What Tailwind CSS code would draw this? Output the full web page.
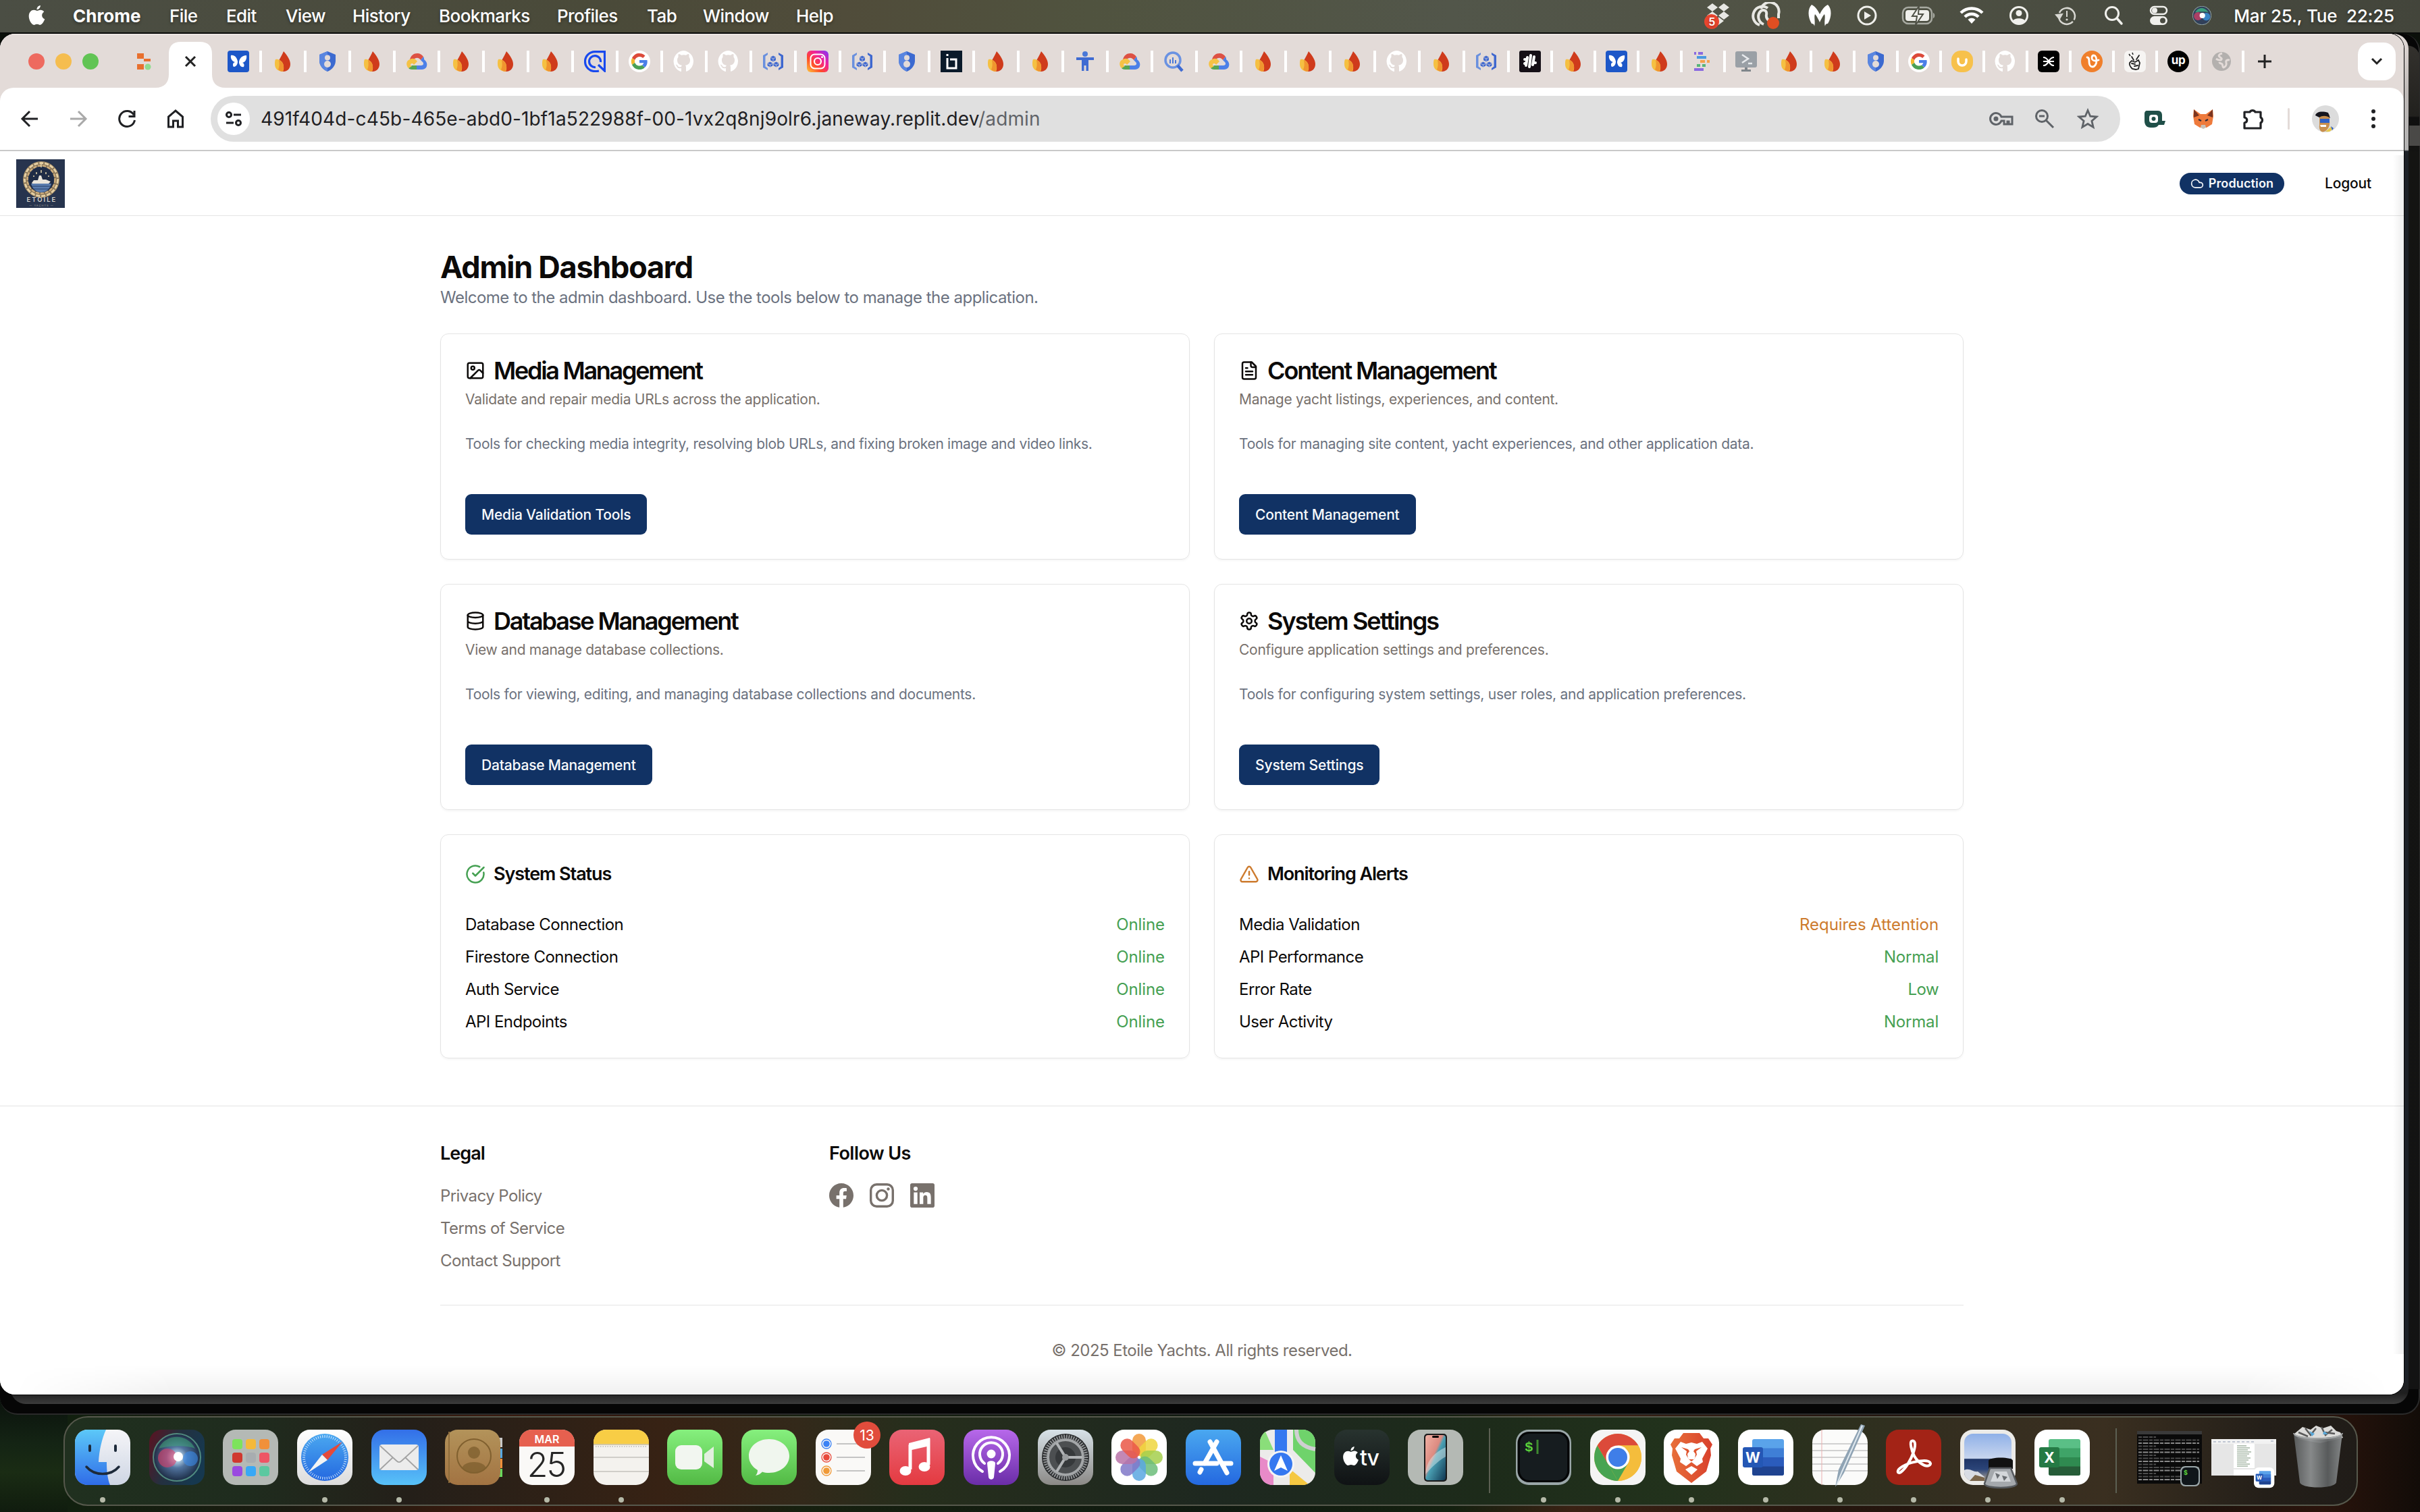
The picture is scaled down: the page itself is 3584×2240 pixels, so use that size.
<!DOCTYPE html>
<html lang="en">
<head>
<meta charset="utf-8">
<title>Admin Dashboard</title>
<script src="https://cdn.jsdelivr.net/npm/@tailwindcss/browser@4"></script>
</head>
<body class="relative h-[2240px] w-[3584px] overflow-hidden bg-[#0b100a] font-['Inter','Liberation_Sans',sans-serif] text-[#0c0a09]">

<!-- Shared symbols -->
<svg class="absolute h-0 w-0" aria-hidden="true">
  <defs>
    <linearGradient id="ig" x1="0" y1="1" x2="1" y2="0"><stop offset="0" stop-color="#ffc93a"/><stop offset=".35" stop-color="#ff4a2a"/><stop offset=".65" stop-color="#f0209a"/><stop offset="1" stop-color="#7a3aff"/></linearGradient>
    <linearGradient id="finderL" x1="0" y1="0" x2="0" y2="1"><stop offset="0" stop-color="#5cc8f8"/><stop offset="1" stop-color="#2f6ce8"/></linearGradient>
    <linearGradient id="finderR" x1="0" y1="0" x2="0" y2="1"><stop offset="0" stop-color="#f5f5f8"/><stop offset="1" stop-color="#ced6e4"/></linearGradient>
    <radialGradient id="siri"><stop offset="0" stop-color="#ffffff"/><stop offset=".18" stop-color="#c9e8ff"/><stop offset=".45" stop-color="#5a7fae"/><stop offset="1" stop-color="#1d2c46"/></radialGradient>
    <linearGradient id="siribg" x1="0" y1="0" x2="1" y2=".4"><stop offset="0" stop-color="#5c1220"/><stop offset=".5" stop-color="#24303f"/><stop offset="1" stop-color="#16384f"/></linearGradient>
    <linearGradient id="white" x1="0" y1="0" x2="0" y2="1"><stop offset="0" stop-color="#ffffff"/><stop offset="1" stop-color="#dcdcdc"/></linearGradient>
    <linearGradient id="blueS" x1="0" y1="0" x2="0" y2="1"><stop offset="0" stop-color="#4aa8f0"/><stop offset="1" stop-color="#2468e0"/></linearGradient>
    <linearGradient id="mail" x1="0" y1="0" x2="0" y2="1"><stop offset="0" stop-color="#336fe8"/><stop offset="1" stop-color="#58c2f8"/></linearGradient>
    <linearGradient id="brown" x1="0" y1="0" x2="0" y2="1"><stop offset="0" stop-color="#b3935a"/><stop offset="1" stop-color="#a27342"/></linearGradient>
    <linearGradient id="green" x1="0" y1="0" x2="0" y2="1"><stop offset="0" stop-color="#86f07e"/><stop offset="1" stop-color="#52b944"/></linearGradient>
    <linearGradient id="red" x1="0" y1="0" x2="0" y2="1"><stop offset="0" stop-color="#ea6475"/><stop offset="1" stop-color="#e43a40"/></linearGradient>
    <linearGradient id="purple" x1="0" y1="0" x2="0" y2="1"><stop offset="0" stop-color="#b768ea"/><stop offset="1" stop-color="#6a2da8"/></linearGradient>
    <linearGradient id="steel" x1="0" y1="0" x2="0" y2="1"><stop offset="0" stop-color="#d8e2e8"/><stop offset="1" stop-color="#8b8986"/></linearGradient>
    <linearGradient id="dark" x1="0" y1="0" x2="0" y2="1"><stop offset="0" stop-color="#28332f"/><stop offset="1" stop-color="#0f1214"/></linearGradient>
    <linearGradient id="phone" x1="0" y1="0" x2="1" y2="1"><stop offset="0" stop-color="#f0b0a4"/><stop offset=".42" stop-color="#dc8a80"/><stop offset=".5" stop-color="#4aa0b4"/><stop offset="1" stop-color="#0f3550"/></linearGradient>
    <linearGradient id="brave" x1="0" y1="0" x2="1" y2="0"><stop offset="0" stop-color="#e8703a"/><stop offset="1" stop-color="#d8402c"/></linearGradient>
    <linearGradient id="sky" x1="0" y1="0" x2="0" y2="1"><stop offset="0" stop-color="#8fb0e8"/><stop offset=".52" stop-color="#c8d6ee"/><stop offset=".54" stop-color="#1f3566"/><stop offset=".75" stop-color="#2b4478"/><stop offset="1" stop-color="#b5a794"/></linearGradient>
    <linearGradient id="bin" x1="0" y1="0" x2="1" y2="0"><stop offset="0" stop-color="#5d6061"/><stop offset=".35" stop-color="#8e9192"/><stop offset=".7" stop-color="#5c5f60"/><stop offset="1" stop-color="#8b8e8f"/></linearGradient>
  </defs>

  <!-- Favicons, 32 grid -->
  <symbol id="f-fly" viewBox="0 0 32 32"><rect width="32" height="32" rx="4" fill="#1d57c8"/><path d="M15 16C14 10 10 6 5 7c-1 5 2 9 6 10-3 1-4 4-2 7 4 0 6-4 6-8zM17 18c0-6 4-11 11-11 1 6-2 10-6 11 3 1 3 4 2 6-4 1-6-2-7-6z" fill="#fff"/></symbol>
  <symbol id="f-fire" viewBox="0 0 32 32"><path d="M17 1c6 7 10 13 10 19 0 7-5 11-10 11-4 0-8-3-9-8-1-6 5-12 9-22z" fill="#cf3b1c"/><path d="M5 13c4-1 9 2 11 6 2 5 1 10 0 12-7 0-12-4-12-11 0-3 0-5 1-7z" fill="#f5c042"/><path d="M10 14c4 2 7 5 7 10 0 3-1 5-1 7-3 0-5-1-7-3 2-4 2-9 1-14z" fill="#f0952f"/></symbol>
  <symbol id="f-shield" viewBox="0 0 32 32"><path d="M16 1l12 5v9c0 7-5 13-12 16C9 28 4 22 4 15V6z" fill="#3c6ad0"/><path d="M16 1v30C9 28 4 22 4 15V6z" fill="#5a86e0"/><circle cx="16" cy="10.500" r="4" fill="#e3dbd8"/><circle cx="16" cy="20" r="5" fill="#e3dbd8"/></symbol>
  <symbol id="f-cloud" viewBox="0 0 32 32"><path d="M6 14C7 7 12 4 17 4c4 0 7 2 9 5l-4 5c-2-4-8-5-12 1z" fill="#dd5144"/><path d="M26 9c1 1 1 3 1 4 4 3 5 7 4 10-1 4-5 5-8 5h-7v-6h7c3 0 4-3 2-5l-3-3z" fill="#4c80e8"/><path d="M16 28H9c-2 0-4-1-5-2l5-4h7z" fill="#57a553"/><path d="M4 26C0 22 0 15 6 13c5-3 9 0 11 3l-5 5c-2-3-5-2-5 0 0 1 1 2 2 2z" fill="#f5c245"/></symbol>
  <symbol id="f-q" viewBox="0 0 32 32"><path d="M22 30c-2 .5-4 .6-6 .6A14.500 14.500 0 0 1 16 1.600h14.500V30L21 21" fill="none" stroke="#1849ee" stroke-width="3.200"/><path d="M17 24.500A8.500 8.500 0 1 1 24.500 17" fill="none" stroke="#1849ee" stroke-width="3.200"/></symbol>
  <symbol id="f-g" viewBox="0 0 32 32"><circle cx="16" cy="16" r="16" fill="#fff"/><path d="M24.500 7.500a12 12 0 0 0-19.500 3.500l4.200 3a7.500 7.500 0 0 1 12-3z" fill="#dc4a3a"/><path d="M5 11a12 12 0 0 0 0 10l4.200-3a7 7 0 0 1 0-4z" fill="#f2b92f"/><path d="M5 21a12 12 0 0 0 19 4l-4-3.500a7.500 7.500 0 0 1-10.800-3.500z" fill="#4aa156"/><path d="M16 14h11.500c.8 4.500-.5 8.500-3.500 11l-4-3.500c1-.8 2-1.800 2.300-3.200H16z" fill="#4a7fe8"/></symbol>
  <symbol id="f-gh" viewBox="0 0 32 32"><path d="M16 0a16 16 0 0 0-5 31c1 0 1-.4 1-1v-4c-4 1-6-1-6.500-2.500-.5-1-1-2-2-2.500 2-.6 3 1 3.500 2 1.500 2 3.500 1.500 5 1 .2-1 .6-2 1-2.300-4-.5-7-2.500-7-7.700 0-2 .6-3.500 1.700-4.500-.3-1-.5-2.500.2-4.500 2 0 3.600 1.200 4.100 1.700a14 14 0 0 1 7 0c.5-.5 2.200-1.700 4.100-1.700.7 2 .5 3.500.2 4.500 1.100 1 1.700 2.500 1.700 4.500 0 5.200-3 7.200-7 7.700.7.700 1 1.700 1 3v5c0 .6 0 1 1 1A16 16 0 0 0 16 0z" fill="#fff"/></symbol>
  <symbol id="f-br" viewBox="0 0 32 32"><path d="M8 3L1 7v18l7 4v-3l-3.500-2.500v-15L8 6z" fill="#6a90de"/><path d="M24 3l7 4v18l-7 4v-3l3.500-2.500v-15L24 6z" fill="#3f68cf"/><path d="M16 7.500l4 2.200v4.600l-4 2.200-4-2.200V9.700zM11.500 16.500l4 2.200v3.600l-4 2.200-4-2.200v-3.600zM20.500 16.500l4 2.200v3.600l-4 2.200-4-2.200v-3.600z" fill="#4069cf"/><path d="M12 10l4 2 4-2M16 12v4M7.500 19l4 2 4-2M16.500 19l4 2 4-2M11.500 21v3M20.500 21v3" stroke="#e3dbd8" stroke-width=".7" fill="none"/></symbol>
  <symbol id="f-ig" viewBox="0 0 32 32"><rect width="32" height="32" rx="6" fill="url(#ig)"/><rect x="5.500" y="5.500" width="21" height="21" rx="6" fill="none" stroke="#fff" stroke-width="2"/><circle cx="16" cy="16" r="5" fill="none" stroke="#fff" stroke-width="2.200"/><circle cx="22.500" cy="9.500" r="1.500" fill="#fff"/></symbol>
  <symbol id="f-b" viewBox="0 0 32 32"><rect width="32" height="32" fill="#0a1a2a"/><path d="M10 5v3M10 11v15h13V13H14" fill="none" stroke="#fff" stroke-width="3"/></symbol>
  <symbol id="f-man" viewBox="0 0 32 32"><circle cx="16" cy="5" r="4" fill="#4a78d8"/><path d="M3 10h26v4h-8v16h-3.500v-8h-3v8H11V14H3z" fill="#3f6bd2"/></symbol>
  <symbol id="f-find" viewBox="0 0 32 32"><circle cx="14" cy="14" r="11" fill="none" stroke="#6a92e2" stroke-width="3.500"/><path d="M10 13v6M14 10v9M18 14v5" stroke="#4a78d8" stroke-width="2"/><path d="M21 22l7 8" stroke="#3f6bd2" stroke-width="4.500"/></symbol>
  <symbol id="f-hash" viewBox="0 0 32 32"><rect width="32" height="32" rx="3" fill="#150f16"/><path d="M12 10l-2 12M17 7l-2 17M22 9l-2 12" stroke="#fff" stroke-width="4" stroke-linecap="round"/><path d="M8 13h1M23 18h1M8 19l2-1" stroke="#fff" stroke-width="4" stroke-linecap="round"/></symbol>
  <symbol id="f-lines" viewBox="0 0 32 32"><path d="M3 4h3M9 4h7" stroke="#8a6ae0" stroke-width="4"/><path d="M7 10h14" stroke="#4a9ae0" stroke-width="4"/><path d="M12 16h7M22 16h4" stroke="#f5a04a" stroke-width="4"/><path d="M7 22h5M15 22h5" stroke="#57b57a" stroke-width="4"/><path d="M3 28h14" stroke="#8a6ae0" stroke-width="4"/></symbol>
  <symbol id="f-mon" viewBox="0 0 32 32"><rect y="1" width="32" height="24" rx="3" fill="#9aa0a6"/><path d="M14 25h4v3h5v3H9v-3h5z" fill="#80868b"/><path d="M10 6l9 6-9 6M19 19h6" fill="none" stroke="#e8eaed" stroke-width="2.500"/></symbol>
  <symbol id="f-u" viewBox="0 0 32 32"><rect width="32" height="32" rx="14" fill="#f7c14b"/><path d="M10 12v4a6 6 0 0 0 12 0v-3" fill="none" stroke="#fff" stroke-width="3.500" stroke-linecap="round"/></symbol>
  <symbol id="f-x" viewBox="0 0 32 32"><rect width="32" height="32" rx="6"/><path d="M8 10c5 0 6 3 8 6 2-3 3-6 8-6M8 22c5 0 6-3 8-6 2 3 3 6 8 6M8 16h16" fill="none" stroke="#fff" stroke-width="2.200"/></symbol>
  <symbol id="f-or" viewBox="0 0 32 32"><circle cx="16" cy="16" r="16" fill="#f07f2b"/><path d="M9 10c3 0 3 3 3 7s2 7 5 7 6-4 6-9-2-8-4-8-3 2-3 4 2 4 5 4l5-1" fill="none" stroke="#fff" stroke-width="2.800" stroke-linecap="round"/></symbol>
  <symbol id="f-hand" viewBox="0 0 32 32"><rect width="32" height="32" rx="7" fill="#f7f5f3"/><path d="M12 27c-3-3-5-6-4-9l3-3 5 2 5-3 2 4-2 9-4 1zM14 14l-3-5M18 13l4-6M11 19l5 1M15 23l5-1" fill="none" stroke="#222" stroke-width="1.800" stroke-linecap="round"/><path d="M7 5l2 3M12 3l1 3" stroke="#222" stroke-width="1.500"/></symbol>
  <symbol id="f-globe" viewBox="0 0 32 32"><circle cx="16" cy="16" r="14" fill="#b3b0ae"/><path d="M17 4c-4 1-6 3-4 5s4 2 3 4-5 1-8-1M28 14c-4-1-6 1-5 4s-1 6-4 7c-2-1-1-4-2-5s-4-1-4-3" fill="none" stroke="#e3dbd8" stroke-width="3"/></symbol>
  <symbol id="apple" viewBox="0 0 24 28"><path d="M17 0c.2 3-2.500 6-5 5.800C11.700 3 14.300.3 17 0zM12.300 7.500c1 0 2.700-1.300 5-1.200 2 .1 3.700 1 4.700 2.500-4.300 2.700-3.500 8.500 1 10.200-1.200 3.500-3.800 8-6.500 8-1.500 0-2.200-1-4.200-1s-2.700 1-4.200 1C5 27 1 20.500 1 15c0-5.500 3.500-8.600 7-8.600 2 0 3.500 1.100 4.300 1.100z"/></symbol>
</svg>

<!-- Wallpaper -->
<div class="absolute inset-x-0 bottom-0 h-[180px] bg-[linear-gradient(90deg,#0e1c10_0%,#12200f_3%,#1a1a10_12%,#3a1a0e_20%,#2e160c_28%,#16200f_33%,#101a10_50%,#14200f_60%,#3a2214_65%,#26160e_75%,#1c120c_90%,#2a140c_96%,#120c08_100%)]"></div>
<div class="absolute bottom-0 left-0 h-[170px] w-[100px] bg-[linear-gradient(180deg,#0a110c_0%,#142414_40%,#1a2c14_65%,#101c0e_100%)]"></div>

<!-- Windows behind -->
<div class="absolute left-0 top-[50px] h-[2046px] w-[3584px] rounded-[26px] border-b-2 border-r-2 border-[#2a2a2a] bg-[#060606]"></div>
<div class="absolute left-[3567px] top-[68px] h-[1990px] w-[16px] rounded-tr-[20px] bg-[linear-gradient(180deg,#33312d_0px,#22211e_104px,#0f0f0f_106px,#141412_160px,#131313_100%)]"></div>
<div class="absolute left-[3568px] top-[186px] h-[30px] w-[16px] bg-[#4a4947]"></div>
<div class="absolute left-[16px] top-[50px] h-[2030px] w-[3551px] rounded-[22px] bg-[linear-gradient(180deg,#e3dbd8_0px,#bdb8b6_90px,#b2b2b2_172px,#1c2026_174px,#1c2026_1990px,#1f1f1f_2014px,#3c3c3c_2030px)]"></div>

<!-- Menu bar -->
<div class="absolute inset-x-0 top-0 flex h-[48px] items-center bg-[linear-gradient(90deg,#4b4e44_0%,#4a4a39_25%,#504c3a_35%,#50533f_45%,#52564a_60%,#505244_75%,#484b40_88%,#43453b_100%)] pb-[2px] text-[26px] font-medium tracking-[-0.022em] text-white [text-shadow:0_2px_4px_rgba(0,0,0,0.35)]">
  <svg class="ml-[41px] h-[30px] w-[27px] fill-white"><use href="#apple"/></svg>
  <div class="ml-[40px] w-[143px] font-bold tracking-normal">Chrome</div>
  <div class="w-[84px]">File</div>
  <div class="w-[88px]">Edit</div>
  <div class="w-[99px]">View</div>
  <div class="w-[128px]">History</div>
  <div class="w-[175px]">Bookmarks</div>
  <div class="w-[133px]">Profiles</div>
  <div class="w-[83px]">Tab</div>
  <div class="w-[138px]">Window</div>
  <div>Help</div>
  <div class="ml-auto mr-[38px] flex items-center">
    <svg class="h-[44px] w-[48px]" viewBox="0 0 48 44"><path d="M15 4l8 6-8 6-8-6zM32 4l8 6-8 6-8-6zM15 16l8 6-8 6-8-6zM32 16l8 6-8 6-8-6zM24 24l8 6-8 6z" fill="#e8e8e4"/><circle cx="14" cy="31" r="11" fill="#e8452e"/><text x="14" y="37" text-anchor="middle" font-size="16" font-weight="600" fill="#fff">5</text></svg>
    <svg class="ml-[25px] h-[40px] w-[48px]" viewBox="0 0 48 40"><path d="M12 34a14 14 0 1 1 12-25M14 10a12 12 0 0 1 26 8v6M18 33a12 12 0 0 1-4-20c6-3 9 1 8 6s2 7 4 9" fill="none" stroke="#e8e8e4" stroke-width="4"/><circle cx="32" cy="31" r="9" fill="#e04e22"/></svg>
    <svg class="ml-[33px] h-[36px] w-[40px]" viewBox="0 0 40 36"><path d="M8 2c5 2 9 8 12 14 3-6 7-12 12-14 6 6 6 18 0 28-3 0-4 2-4 4-2-6 1-14-1-18-3 3-5 8-7 12-2-4-4-9-7-12-2 4 1 12-1 18 0-2-1-4-4-4C2 20 2 8 8 2z" fill="#fff"/></svg>
    <svg class="ml-[30px] h-[40px] w-[40px]" viewBox="0 0 40 40"><circle cx="20" cy="20" r="13" fill="none" stroke="#f0f0ec" stroke-width="3"/><path d="M16 14l10 6-10 6z" fill="#f0f0ec"/></svg>
    <svg class="ml-[31px] h-[30px] w-[52px]" viewBox="0 0 52 30"><rect x="2" y="3" width="43" height="24" rx="8" fill="none" stroke="#a8aaa2" stroke-width="2.500"/><rect x="6" y="7" width="35" height="16" rx="4" fill="#f0f0ec"/><path d="M47 11c3 1 3 7 0 8z" fill="#a8aaa2"/><path d="M26 1L16 16h7l-2 13 11-16h-7z" fill="#f0f0ec" stroke="#4f5146" stroke-width="2"/></svg>
    <svg class="ml-[33px] h-[28px] w-[38px]" viewBox="0 0 38 28"><path d="M3 10a23 23 0 0 1 32 0M9 16a14 14 0 0 1 20 0" fill="none" stroke="#fff" stroke-width="4.500"/><path d="M13.500 20a8 8 0 0 1 11 0L19 26z" fill="#fff"/></svg>
    <svg class="ml-[33px] h-[36px] w-[36px]" viewBox="0 0 36 36"><circle cx="18" cy="18" r="12.500" fill="none" stroke="#f0f0ec" stroke-width="3"/><circle cx="18" cy="14.500" r="4.500" fill="#f0f0ec"/><path d="M9 26c2-5 16-5 18 0-4 5-14 5-18 0z" fill="#f0f0ec"/></svg>
    <svg class="ml-[35px] h-[36px] w-[36px]" viewBox="0 0 36 36"><path d="M7 14a12 12 0 1 1-1 6" fill="none" stroke="#d8d8d2" stroke-width="2.500" stroke-dasharray="38 3"/><path d="M2 17l5 6 4-7zM18 11v9" fill="#d8d8d2" stroke="#d8d8d2" stroke-width="2"/><circle cx="18" cy="24" r="1.600" fill="#d8d8d2"/></svg>
    <svg class="ml-[35px] h-[36px] w-[32px]" viewBox="0 0 32 36"><circle cx="14" cy="15" r="9.500" fill="none" stroke="#f0f0ec" stroke-width="3"/><path d="M21 22l7 8" stroke="#f0f0ec" stroke-width="3.500" stroke-linecap="round"/></svg>
    <svg class="ml-[35px] h-[32px] w-[32px]" viewBox="0 0 32 32"><rect x="4" y="3" width="24" height="11" rx="5.500" fill="none" stroke="#f0f0ec" stroke-width="2.500"/><circle cx="10" cy="8.500" r="4" fill="#f0f0ec"/><rect x="3" y="17" width="26" height="13" rx="6.500" fill="#f0f0ec"/><circle cx="22" cy="23.500" r="4" fill="#4a4c42"/></svg>
    <svg class="ml-[34px] mr-[33px] h-[28px] w-[28px]" viewBox="0 0 82 82"><circle cx="41" cy="41" r="40" fill="#31405a" stroke="#8fa0a0" stroke-width="3"/><circle cx="24" cy="44" r="18" fill="#e0406a" opacity=".7"/><circle cx="60" cy="46" r="17" fill="#3a9ae8" opacity=".75"/><path d="M12 28c14-28 44-24 58 0-12-6-40-4-58 0z" fill="#3fbe8a" opacity=".75"/><circle cx="43" cy="41" r="12" fill="#fff"/></svg>
    <div class="whitespace-pre tracking-[-0.007em]">Mar 25., Tue  22:25</div>
  </div>
</div>
<div class="absolute inset-x-0 top-[48px] h-[2px] bg-[#0a0c0a]"></div>

<!-- Browser window -->
<div class="absolute left-0 top-[50px] flex h-[2016px] w-[3560px] flex-col overflow-hidden rounded-[22px] bg-white shadow-[0_0_0_1px_#050505]">
  <!-- Tab strip -->
  <div class="flex h-[80px] shrink-0 items-center border-t-2 border-[#ece5e2] bg-[#e3dbd8]">
    <div class="ml-[42px] flex gap-[16px]">
      <div class="h-[24px] w-[24px] rounded-full bg-[#ee6a5f]"></div>
      <div class="h-[24px] w-[24px] rounded-full bg-[#f5bd4f]"></div>
      <div class="h-[24px] w-[24px] rounded-full bg-[#61c454]"></div>
    </div>
    <svg class="ml-[51px] h-[32px] w-[32px]" viewBox="0 0 32 32"><path d="M6 4h10v8H6zM16 12h10v4H16zM6 20h10v8H6z" fill="#e8702e"/><circle cx="22" cy="24" r="4.500" fill="#8fdc8f"/></svg>
    <div class="relative -mr-[4px] ml-[21px] flex h-full w-[68px] items-center justify-center">
      <svg class="absolute -left-[20px] bottom-0 h-[68px] w-[104px]" viewBox="0 0 104 68"><path d="M0 68c14 0 20-8 20-20V18C20 6 26 0 38 0h28c12 0 18 6 18 18v30c0 12 6 20 20 20z" fill="#fff"/></svg>
      <svg class="relative mr-[4px] h-[20px] w-[20px]" viewBox="0 0 20 20"><path d="M3 3l14 14M17 3L3 17" stroke="#222" stroke-width="3"/></svg>
    </div>
    <div class="ml-[8px] flex" id="tabs"></div>
    <svg class="ml-[19px] h-[22px] w-[22px]" viewBox="0 0 22 22"><path d="M11 1v20M1 11h20" stroke="#222" stroke-width="3"/></svg>
    <div class="ml-auto mr-[12px] flex h-[56px] w-[56px] items-center justify-center rounded-[18px] bg-white"><svg class="h-[14px] w-[18px]" viewBox="0 0 18 14"><path d="M2 3l7 7 7-7" fill="none" stroke="#222" stroke-width="3"/></svg></div>
  </div>
  <!-- Toolbar -->
  <div class="shrink-0 bg-[#e3dbd8]">
    <div class="flex h-[94px] items-center rounded-t-[20px] border-b-2 border-[#c9c9c9] bg-white">
      <svg class="ml-[30px] h-[28px] w-[28px]" viewBox="0 0 28 28"><path d="M26 14H4M14 3L3 14l11 11" fill="none" stroke="#202124" stroke-width="3"/></svg>
      <svg class="ml-[44px] h-[28px] w-[28px]" viewBox="0 0 28 28"><path d="M2 14h22M14 3l11 11-11 11" fill="none" stroke="#a9a9a9" stroke-width="3"/></svg>
      <svg class="ml-[44px] h-[28px] w-[28px]" viewBox="0 0 28 28"><path d="M24 8A11.500 11.500 0 1 0 25.500 16M25 2v8.500h-8.500" fill="none" stroke="#202124" stroke-width="3"/></svg>
      <svg class="ml-[44px] h-[30px] w-[28px]" viewBox="0 0 28 30"><path d="M3.500 12v15h7v-9h7v9h7V12L14 3z" fill="none" stroke="#202124" stroke-width="3"/></svg>
      <div class="ml-[38px] flex h-[68px] w-[2828px] items-center rounded-full bg-[#e0e0e0]">
        <div class="ml-[10px] flex h-[48px] w-[48px] items-center justify-center rounded-full bg-white"><svg class="h-[26px] w-[26px]" viewBox="0 0 26 26"><circle cx="6" cy="7" r="3.500" fill="none" stroke="#202124" stroke-width="3"/><path d="M13 7h11M2 19h11" stroke="#202124" stroke-width="3"/><circle cx="20" cy="19" r="3.500" fill="none" stroke="#202124" stroke-width="3"/></svg></div>
        <div class="ml-[16px] whitespace-nowrap text-[28px] tracking-[0.005em] text-[#1f2023]">491f404d-c45b-465e-abd0-1bf1a522988f-00-1vx2q8nj9olr6.janeway.replit.dev<span class="text-[#606368]">/admin</span></div>
        <svg class="ml-auto h-[24px] w-[38px]" viewBox="0 0 38 24"><path d="M19 9a8.500 8.500 0 1 0 0 6h4v5h5v-4h2v4h5V9z" fill="none" stroke="#5f6368" stroke-width="3"/><circle cx="11" cy="12" r="3.500" fill="#5f6368"/></svg>
        <svg class="ml-[30px] h-[30px] w-[30px]" viewBox="0 0 30 30"><circle cx="11" cy="11" r="8.500" fill="none" stroke="#5f6368" stroke-width="3"/><path d="M7 11h8M17 17l11 11" stroke="#5f6368" stroke-width="3"/></svg>
        <svg class="ml-[33px] mr-[32px] h-[32px] w-[32px]" viewBox="0 0 32 32"><path d="M16 3.500l3.700 8.700 9.300.8-7.100 6.200 2.200 9.200L16 23.500l-8.100 4.900 2.200-9.200L3 13l9.300-.8z" fill="none" stroke="#5f6368" stroke-width="2.800"/></svg>
      </div>
      <svg class="ml-[34px] h-[32px] w-[34px]" viewBox="0 0 34 32"><path d="M6 4h16c4 0 6 3 6 7v8h5l-2 6h-8c-2 3-5 4-8 4h-4c-6 0-9-4-9-10V9c0-3 1-5 4-5z" fill="#1f4f48"/><rect x="9" y="10" width="13" height="12" rx="4" fill="#fff"/><circle cx="15.500" cy="16" r="3" fill="#1f4f48"/></svg>
      <svg class="ml-[38px] h-[32px] w-[34px]" viewBox="0 0 34 32"><path d="M3 2l10 7h8l10-7 1 10-2 12-8 5h-10l-8-5-2-12z" fill="#ee7a3c"/><path d="M3 2l8 9-8 3zM31 2l-8 9 8 3z" fill="#7a3520"/><path d="M13 29l1-4h6l1 4-4 2z" fill="#c8c0b8"/><path d="M10 17l4 2M24 17l-4 2" stroke="#2a2a3a" stroke-width="2"/></svg>
      <svg class="ml-[40px] h-[34px] w-[34px]" viewBox="0 0 34 34"><path d="M4 7h8a4.500 4.500 0 0 1 8 0h8v8a4.500 4.500 0 0 1 0 8v8H4v-8c5-1 5-7 0-8z" fill="none" stroke="#202124" stroke-width="3.200" stroke-linejoin="round"/></svg>
      <div class="ml-[34px] h-[32px] w-[3px] rounded bg-[#e3dbd8]"></div>
      <svg class="ml-[33px] h-[40px] w-[40px]" viewBox="0 0 40 40"><circle cx="20" cy="20" r="20" fill="#dcdcdc"/><path d="M11 14c5-4 11-4 15 0v10c1 7-3 13-8 15s-8-4-7-9z" fill="#c88f4e"/><path d="M5 15c1-5 9-7 19-4l3 8c-5-4-12-4-16-1z" fill="#15151d"/><path d="M12 20h14v6H12z" fill="#2f62c8"/><path d="M12 29h9v3h-8z" fill="#fff"/><path d="M20 39l8-7 3 3-5 4z" fill="#e8c84a"/><path d="M28 31l4 3-2 3z" fill="#2f62c8"/></svg>
      <div class="ml-[48px] flex flex-col gap-[5px]"><i class="h-[6px] w-[6px] rounded-full bg-[#202124]"></i><i class="h-[6px] w-[6px] rounded-full bg-[#202124]"></i><i class="h-[6px] w-[6px] rounded-full bg-[#202124]"></i></div>
    </div>
  </div>

  <!-- Page -->
  <div class="flex grow flex-col bg-white">
    <header class="flex h-[96px] shrink-0 items-center border-b border-[#e4e4e4] pl-[24px]">
      <svg class="h-[72px] w-[72px]" viewBox="0 0 72 72"><rect width="72" height="72" fill="#27344e"/><g fill="none"><circle cx="37" cy="30" r="23" stroke="#8a7658" stroke-width="7"/><circle cx="37" cy="30" r="24.500" stroke="#e6d0a4" stroke-width="3" stroke-dasharray="6 2"/><circle cx="37" cy="30" r="20.500" stroke="#cfae7c" stroke-width="2.500" stroke-dasharray="5 2"/><circle cx="37" cy="30" r="26.500" stroke="#b89a6c" stroke-width=".8"/></g><circle cx="37" cy="30" r="18.500" fill="#1f2c46"/><path d="M22 36h30c-2 9-9 13-15 13s-13-4-15-13z" fill="#5a7cae"/><path d="M23 40h28M26 44h22" stroke="#27406a" stroke-width="1"/><path d="M23 35l3-4h6l2-7h3l2 6h5l7 3-3 3H24z" fill="#ebe6dc"/><path d="M37 16v4M30 19v3M44 19v3M37 7v5M26 24v2M48 24v2" stroke="#e8d8b0" stroke-width="1.500"/><text x="38" y="63" text-anchor="middle" font-size="9.500" font-weight="600" letter-spacing="2" font-family="Inter" fill="#d8d4cc">ETOILE</text><text x="37.500" y="69.500" text-anchor="middle" font-size="4" letter-spacing="1" font-family="Inter" fill="#a8a49c">— YACHTS —</text></svg>
      <div class="ml-auto flex h-[32px] w-[155px] items-center justify-center gap-[7px] rounded-full bg-[#113264] text-[18px] font-semibold tracking-[0.008em] text-[#f8fafc]">
        <svg class="h-[20px] w-[20px] fill-none stroke-current" viewBox="0 0 24 24" stroke-width="2"><path d="M17.500 19H9a7 7 0 1 1 6.710-9h1.790a4.500 4.500 0 1 1 0 9Z"/></svg>Production</div>
      <div class="ml-[60px] mr-[48px] pt-[1px] text-[21px] font-medium tracking-[-0.008em]">Logout</div>
    </header>

    <main class="mx-auto w-[2256px] pt-[49px]">
      <h1 class="text-[45px] font-bold leading-[54px] tracking-[-0.028em]">Admin Dashboard</h1>
      <p class="text-[24px] leading-[36px] tracking-[-0.0212em] text-[#6b7280]">Welcome to the admin dashboard. Use the tools below to manage the application.</p>
      <div class="mt-[35px] grid grid-cols-2 gap-[36px]">
        <section class="rounded-[12px] border border-[#e4e4e4] p-[36px] shadow-[0_2px_3px_rgba(0,0,0,0.04)]">
          <h2 class="flex items-center gap-[12px] text-[36px] font-semibold leading-[36px] tracking-[-0.063em]"><svg class="h-[30px] w-[30px] fill-none stroke-current" viewBox="0 0 24 24" stroke-width="2" stroke-linecap="round" stroke-linejoin="round"><rect width="18" height="18" x="3" y="3" rx="2"/><circle cx="9" cy="9" r="2"/><path d="m21 15-3.086-3.086a2 2 0 0 0-2.828 0L6 21"/></svg>Media Management</h2>
          <p class="mt-[10px] text-[21px] leading-[30px] tracking-[-0.0125em] text-[#78716c]">Validate and repair media URLs across the application.</p>
          <p class="mt-[36px] text-[21px] leading-[30px] tracking-[-0.0142em] text-[#6b7280]">Tools for checking media integrity, resolving blob URLs, and fixing broken image and video links.</p>
          <button class="mt-[59px] block h-[60px] rounded-[9px] bg-[#113264] px-[24px] pt-[1px] text-[21px] font-medium tracking-[-0.0095em] text-[#f8fafc]">Media Validation Tools</button>
        </section>
        <section class="rounded-[12px] border border-[#e4e4e4] p-[36px] shadow-[0_2px_3px_rgba(0,0,0,0.04)]">
          <h2 class="flex items-center gap-[12px] text-[36px] font-semibold leading-[36px] tracking-[-0.059em]"><svg class="h-[30px] w-[30px] fill-none stroke-current" viewBox="0 0 24 24" stroke-width="2" stroke-linecap="round" stroke-linejoin="round"><path d="M15 2H6a2 2 0 0 0-2 2v16a2 2 0 0 0 2 2h12a2 2 0 0 0 2-2V7Z"/><path d="M14 2v4a2 2 0 0 0 2 2h4M10 9H8M16 13H8M16 17H8"/></svg>Content Management</h2>
          <p class="mt-[10px] text-[21px] leading-[30px] tracking-[-0.013em] text-[#78716c]">Manage yacht listings, experiences, and content.</p>
          <p class="mt-[36px] text-[21px] leading-[30px] tracking-[-0.0128em] text-[#6b7280]">Tools for managing site content, yacht experiences, and other application data.</p>
          <button class="mt-[59px] block h-[60px] rounded-[9px] bg-[#113264] px-[24px] pt-[1px] text-[21px] font-medium tracking-[-0.0095em] text-[#f8fafc]">Content Management</button>
        </section>
        <section class="rounded-[12px] border border-[#e4e4e4] p-[36px] shadow-[0_2px_3px_rgba(0,0,0,0.04)]">
          <h2 class="flex items-center gap-[12px] text-[36px] font-semibold leading-[36px] tracking-[-0.06em]"><svg class="h-[30px] w-[30px] fill-none stroke-current" viewBox="0 0 24 24" stroke-width="2" stroke-linecap="round" stroke-linejoin="round"><ellipse cx="12" cy="5" rx="9" ry="3"/><path d="M3 5V19A9 3 0 0 0 21 19V5M3 12A9 3 0 0 0 21 12"/></svg>Database Management</h2>
          <p class="mt-[10px] text-[21px] leading-[30px] tracking-[-0.014em] text-[#78716c]">View and manage database collections.</p>
          <p class="mt-[36px] text-[21px] leading-[30px] tracking-[-0.0132em] text-[#6b7280]">Tools for viewing, editing, and managing database collections and documents.</p>
          <button class="mt-[59px] block h-[60px] rounded-[9px] bg-[#113264] px-[24px] pt-[1px] text-[21px] font-medium tracking-[-0.0095em] text-[#f8fafc]">Database Management</button>
        </section>
        <section class="rounded-[12px] border border-[#e4e4e4] p-[36px] shadow-[0_2px_3px_rgba(0,0,0,0.04)]">
          <h2 class="flex items-center gap-[12px] text-[36px] font-semibold leading-[36px] tracking-[-0.054em]"><svg class="h-[30px] w-[30px] fill-none stroke-current" viewBox="0 0 24 24" stroke-width="2" stroke-linecap="round" stroke-linejoin="round"><path d="M12.220 2h-.44a2 2 0 0 0-2 2v.18a2 2 0 0 1-1 1.730l-.43.25a2 2 0 0 1-2 0l-.15-.08a2 2 0 0 0-2.730.73l-.22.38a2 2 0 0 0 .73 2.730l.15.1a2 2 0 0 1 1 1.720v.51a2 2 0 0 1-1 1.740l-.15.09a2 2 0 0 0-.73 2.730l.22.38a2 2 0 0 0 2.730.73l.15-.08a2 2 0 0 1 2 0l.43.25a2 2 0 0 1 1 1.730V20a2 2 0 0 0 2 2h.44a2 2 0 0 0 2-2v-.18a2 2 0 0 1 1-1.730l.43-.25a2 2 0 0 1 2 0l.15.08a2 2 0 0 0 2.730-.73l.22-.39a2 2 0 0 0-.73-2.730l-.15-.08a2 2 0 0 1-1-1.740v-.5a2 2 0 0 1 1-1.740l.15-.09a2 2 0 0 0 .73-2.730l-.22-.38a2 2 0 0 0-2.730-.73l-.15.08a2 2 0 0 1-2 0l-.43-.25a2 2 0 0 1-1-1.730V4a2 2 0 0 0-2-2z"/><circle cx="12" cy="12" r="3"/></svg>System Settings</h2>
          <p class="mt-[10px] text-[21px] leading-[30px] tracking-[-0.013em] text-[#78716c]">Configure application settings and preferences.</p>
          <p class="mt-[36px] text-[21px] leading-[30px] tracking-[-0.0132em] text-[#6b7280]">Tools for configuring system settings, user roles, and application preferences.</p>
          <button class="mt-[59px] block h-[60px] rounded-[9px] bg-[#113264] px-[24px] pt-[1px] text-[21px] font-medium tracking-[-0.006em] text-[#f8fafc]">System Settings</button>
        </section>
        <section class="rounded-[12px] border border-[#e4e4e4] p-[36px] shadow-[0_2px_3px_rgba(0,0,0,0.04)]">
          <h2 class="flex items-center gap-[12px] text-[27px] font-semibold leading-[42px] tracking-[-0.04em]"><svg class="h-[30px] w-[30px] fill-none stroke-[#45a052]" viewBox="0 0 24 24" stroke-width="2" stroke-linecap="round" stroke-linejoin="round"><path d="M21.801 10A10 10 0 1 1 17 3.335"/><path d="m9 11 3 3L22 4"/></svg><span class="pt-[1px]">System Status</span></h2>
          <div class="-mb-[1px] mt-[36px] flex flex-col gap-[12px] text-[24px] leading-[36px] tracking-[-0.022em]">
            <div class="flex justify-between"><span>Database Connection</span><span class="tracking-[-0.004em] text-[#45a052]">Online</span></div>
            <div class="flex justify-between"><span>Firestore Connection</span><span class="tracking-[-0.004em] text-[#45a052]">Online</span></div>
            <div class="flex justify-between"><span>Auth Service</span><span class="tracking-[-0.004em] text-[#45a052]">Online</span></div>
            <div class="flex justify-between"><span>API Endpoints</span><span class="tracking-[-0.004em] text-[#45a052]">Online</span></div>
          </div>
        </section>
        <section class="rounded-[12px] border border-[#e4e4e4] p-[36px] shadow-[0_2px_3px_rgba(0,0,0,0.04)]">
          <h2 class="flex items-center gap-[12px] text-[27px] font-semibold leading-[42px] tracking-[-0.042em]"><svg class="h-[30px] w-[30px] fill-none stroke-[#cd7b2e]" viewBox="0 0 24 24" stroke-width="2" stroke-linecap="round" stroke-linejoin="round"><path d="m21.730 18-8-14a2 2 0 0 0-3.480 0l-8 14A2 2 0 0 0 4 21h16a2 2 0 0 0 1.730-3M12 9v4M12 17h.01"/></svg><span class="pt-[1px]">Monitoring Alerts</span></h2>
          <div class="-mb-[1px] mt-[36px] flex flex-col gap-[12px] text-[24px] leading-[36px] tracking-[-0.022em]">
            <div class="flex justify-between"><span>Media Validation</span><span class="tracking-[-0.003em] text-[#cd7b2e]">Requires Attention</span></div>
            <div class="flex justify-between"><span>API Performance</span><span class="tracking-[-0.008em] text-[#45a052]">Normal</span></div>
            <div class="flex justify-between"><span>Error Rate</span><span class="text-[#45a052]">Low</span></div>
            <div class="flex justify-between"><span>User Activity</span><span class="tracking-[-0.008em] text-[#45a052]">Normal</span></div>
          </div>
        </section>
      </div>
    </main>

    <footer class="mt-[70px] grow border-t border-[#e4e4e4] pt-[49px]">
      <div class="mx-auto w-[2256px]">
        <div class="grid grid-cols-4 gap-[48px]">
          <div>
            <h3 class="text-[27px] font-semibold leading-[42px] tracking-[-0.035em]">Legal</h3>
            <div class="mt-[24px] flex flex-col gap-[12px] text-[24px] leading-[36px] tracking-[-0.024em] text-[#78716c]"><a>Privacy Policy</a><a>Terms of Service</a><a>Contact Support</a></div>
          </div>
          <div>
            <h3 class="text-[27px] font-semibold leading-[42px] tracking-[-0.02em]">Follow Us</h3>
            <div class="mt-[23px] flex gap-[24px]">
              <svg class="h-[36px] w-[36px] fill-[#78716c]" viewBox="2 2 20 20"><path d="M22 12c0-5.523-4.477-10-10-10S2 6.477 2 12c0 4.991 3.657 9.128 8.438 9.878v-6.987h-2.540V12h2.540V9.797c0-2.506 1.492-3.890 3.777-3.890 1.094 0 2.238.195 2.238.195v2.460h-1.260c-1.243 0-1.630.771-1.630 1.562V12h2.773l-.443 2.890h-2.330v6.988C18.343 21.128 22 16.991 22 12z"/></svg>
              <svg class="h-[36px] w-[36px] fill-none stroke-[#78716c]" viewBox="0 0 36 36"><rect x="1.700" y="1.700" width="32.600" height="32.600" rx="8.500" stroke-width="3.400"/><circle cx="18" cy="18" r="7.600" stroke-width="3.400"/><circle cx="27.500" cy="8.500" r="2.200" class="fill-[#78716c] stroke-none"/></svg>
              <svg class="h-[36px] w-[36px] fill-[#78716c]" viewBox="0 0 24 24"><path d="M20.450 20.450h-3.560v-5.570c0-1.330-.02-3.040-1.850-3.040-1.850 0-2.140 1.450-2.140 2.940v5.670H9.350V9h3.410v1.560h.05c.48-.9 1.640-1.850 3.370-1.850 3.600 0 4.270 2.370 4.270 5.460zM5.340 7.430a2.060 2.060 0 1 1 0-4.130 2.060 2.060 0 0 1 0 4.130zM7.120 20.450H3.560V9h3.560zM22.220 0H1.770C.79 0 0 .77 0 1.730v20.540C0 23.230.79 24 1.770 24h20.450c.98 0 1.780-.77 1.780-1.730V1.730C24 .77 23.200 0 22.220 0z"/></svg>
            </div>
          </div>
        </div>
        <div class="mt-[47px] border-t border-[#e4e4e4] pt-[49px] text-center text-[24px] leading-[36px] tracking-[-0.0214em] text-[#78716c]">© 2025 Etoile Yachts. All rights reserved.</div>
      </div>
    </footer>
  </div>
  <!-- Edge shading -->
  <div class="absolute inset-x-0 bottom-0 h-[44px] bg-[linear-gradient(180deg,rgba(0,0,0,0),rgba(0,0,0,0.06))] [mask-image:linear-gradient(90deg,transparent_20px,#000_260px,#000_3320px,transparent_3540px)]"></div>
  <div class="absolute bottom-[60px] right-0 top-[180px] w-[16px] bg-[linear-gradient(90deg,rgba(0,0,0,0),rgba(0,0,0,0.07))]"></div>
</div>

<!-- Dock -->
<div class="absolute left-[94px] top-[2098px] flex h-[133px] w-[3398px] items-start rounded-[36px] border-2 border-[#56584c] bg-[linear-gradient(90deg,#20301f_0%,#1f2c1e_8%,#241f19_15%,#372214_26%,#33291a_32%,#262e1c_37%,#1e2820_50%,#1d2b1a_62%,#22321c_70%,#352e20_83%,#3a2f20_89%,#241f19_96%,#201c18_100%)] pl-[1px]" id="dock"></div>

<script>
const tabs = ['fly','fire','shield','fire','cloud','fire','fire','fire','q','g','gh','gh','br','ig','br','shield','b','fire','fire','man','cloud','find','cloud','fire','fire','fire','gh','fire','br','hash','fire','fly','fire','lines','mon','fire','fire','shield','g','u','gh','x','or','hand','up','globe'];
document.getElementById('tabs').innerHTML = tabs.map((t, i) =>
  `<div class="flex h-[32px] shrink-0 items-center justify-center border-r-4 border-white ${i < 29 ? 'w-[66px]' : 'w-[64px]'}">${t === 'up'
    ? '<div class="flex h-[32px] w-[32px] items-center justify-center rounded-full bg-black pb-[3px] text-[17px] font-bold leading-none tracking-tight text-white">up</div>'
    : `<svg class="h-[32px] w-[32px]"><use href="#f-${t}"/></svg>`}</div>`).join('');

const bg = f => `<rect x="0" y="0" width="82" height="82" rx="19" fill="${f}"/>`;
const ticks = (n, r1, r2, c, w) => Array.from({length: n}, (_, i) => { const a = i * 2 * Math.PI / n; return `<path d="M${41 + r1 * Math.cos(a)} ${41 + r1 * Math.sin(a)}L${41 + r2 * Math.cos(a)} ${41 + r2 * Math.sin(a)}" stroke="${c}" stroke-width="${w}"/>`; }).join('');
const office = (l, c) => bg('#fff') + `<rect x="21" y="14" width="47" height="54" rx="3" fill="${c[0]}"/><rect x="21" y="27.500" width="47" height="14" fill="${c[1]}"/><rect x="21" y="41" width="47" height="14" fill="${c[2]}"/><path d="M21 54.500h47V65a3 3 0 0 1-3 3H24a3 3 0 0 1-3-3z" fill="${c[3]}"/><rect x="7" y="26" width="30" height="30" rx="3" fill="${c[4]}"/><text x="22" y="48.500" text-anchor="middle" font-size="21" font-weight="700" fill="#fff">${l}</text>`;
const petals = ['#f2993a','#efd63f','#a5cf4c','#6cbd7a','#5aa7e0','#8078c8','#b873a8','#ea5848'];
const icons = [
  [bg('url(#finderR)') + '<path d="M19 0H46c-6 13-10 30-11 48h12c0 12 1 24 5 34H19C8 82 0 74 0 63V19C0 8 8 0 19 0z" fill="url(#finderL)"/><path d="M22 24v7M60 24v7" stroke="#1d2a3a" stroke-width="4" stroke-linecap="round"/><path d="M17 55c12 14 36 14 48 0" fill="none" stroke="#1d2a3a" stroke-width="3.500" stroke-linecap="round"/>', 1],
  [bg('url(#siribg)') + '<circle cx="41" cy="41" r="35" fill="url(#siri)" opacity=".85" stroke="#5a9a8a" stroke-width="2"/><circle cx="27" cy="42" r="14" fill="#e0406a" opacity=".6"/><circle cx="61" cy="43" r="11" fill="#3a8ae8" opacity=".6"/><path d="M14 28c10-22 42-24 54 0-14-6-38-4-54 0z" fill="#3fae7a" opacity=".5"/><circle cx="43" cy="40" r="7" fill="#fff"/>', 0],
  [bg('#b4b9b5') + ['#7de35c','#f5b93a','#f0903a','#d0382f','#a8adb0','#ee5565','#9a4ae0','#38a8f5','#5cc8a0'].map((c, i) => `<rect x="${14 + (i % 3) * 20}" y="${14 + Math.floor(i / 3) * 20}" width="15" height="15" rx="4" fill="${c}"/>`).join(''), 0],
  [bg('url(#white)') + '<circle cx="41" cy="41" r="35" fill="url(#blueS)"/>' + ticks(60, 29, 33, '#d8ecff', 1) + '<path d="M67 18L45 45l-8-8z" fill="#e5493a"/><path d="M16 64l21-27 8 8z" fill="#f4f4f4"/>', 1],
  [bg('url(#mail)') + '<rect x="12" y="22" width="58" height="38" rx="4" fill="#ececec"/><path d="M13 24l24 22c3 3 5 3 8 0l24-22M13 59l19-18M69 59L50 41" fill="none" stroke="#a3a3a3" stroke-width="1.800"/>', 1],
  ['<path d="M78 12h7v14h-7z" fill="#c8c8c8"/><path d="M78 28h7v14h-7z" fill="#58a8e0"/><path d="M78 43h7v14h-7z" fill="#f0903a"/><path d="M78 58h7v12h-7z" fill="#6ad85c"/>' + bg('url(#brown)') + '<path d="M6 3v76" stroke="#8f6d3c" stroke-width="2"/><circle cx="43" cy="39" r="25" fill="none" stroke="#80602f" stroke-width="2"/><circle cx="43" cy="34" r="9" fill="#80602f" opacity=".8"/><path d="M25 57c4-12 32-12 36 0-8 9-28 9-36 0z" fill="#80602f" opacity=".8"/>', 0],
  [bg('#faf9f7') + '<path d="M0 25V19C0 8 8 0 19 0h44c11 0 19 8 19 19v6z" fill="#e6604f"/><text x="41" y="19.500" text-anchor="middle" font-size="16" font-weight="600" fill="#fff">MAR</text><text x="40" y="70" text-anchor="middle" font-size="50" font-weight="300" letter-spacing="-2" fill="#262626">25</text>', 1],
  [bg('#f4f2ee') + '<path d="M0 21V19C0 8 8 0 19 0h44c11 0 19 8 19 19v2z" fill="#f8cd45"/><path d="M0 22h82" stroke="#c9b98a" stroke-width="1.500"/><path d="M0 41h82M0 62h82" stroke="#d0cec9" stroke-width="2"/><path d="M3 25h76" stroke="#c8c6c0" stroke-width="2" stroke-dasharray="1.500 2"/>', 1],
  [bg('url(#green)') + '<rect x="12" y="23" width="40" height="36" rx="9" fill="#f2f6f0"/><path d="M55 36l14-11v32l-14-10z" fill="#e2efdf"/>', 0],
  [bg('url(#green)') + '<path d="M41 14c17 0 30 11 30 25S58 64 41 64c-4 0-7-.5-10-1.500-3 3-6 5-10 5.500 2-2 3-5 3-8C16 55 11 48 11 39c0-14 13-25 30-25z" fill="#f0f6ee"/>', 0],
  [bg('#faf9f7') + ['#3a82f5','#e84a3c','#f09a38'].map((c, i) => `<circle cx="16" cy="${21 + i * 20}" r="7" fill="none" stroke="${c}" stroke-width="1.300"/><circle cx="16" cy="${21 + i * 20}" r="4.800" fill="${c}"/><path d="M31 ${21 + i * 20}h42" stroke="#c4c4c4" stroke-width="1.800"/>`).join('') + '<circle cx="76" cy="8" r="20" fill="#e14c3c"/><text x="76" y="15.500" text-anchor="middle" font-size="21" fill="#fff">13</text>', 0],
  [bg('url(#red)') + '<path d="M31 59V24l27-8v36" fill="none" stroke="#fff" stroke-width="5"/><path d="M29 20l31-8v12l-31 7z" fill="#fff"/><ellipse cx="24" cy="61" rx="8.500" ry="7" fill="#fff"/><ellipse cx="52" cy="55" rx="8.500" ry="7" fill="#fff"/>', 0],
  [bg('url(#purple)') + '<circle cx="41" cy="36" r="6.500" fill="#fff"/><path d="M35 50c0-5 12-5 12 0l-2 20c-.5 5-7.500 5-8 0z" fill="#fff"/><path d="M31 50a17 17 0 1 1 20 0M28 62a27 27 0 1 1 26 0" fill="none" stroke="#fff" stroke-width="4" stroke-linecap="round"/>', 0],
  [bg('url(#steel)') + '<circle cx="41" cy="41" r="35" fill="#26282a"/>' + ticks(54, 28, 33.500, '#8f9294', 2) + '<circle cx="41" cy="41" r="26" fill="#4c4f51" stroke="#a3a6a8" stroke-width="4"/><circle cx="41" cy="41" r="15" fill="#36393b"/><path d="M41 41h25M41 41L28 20M41 41L28 62" stroke="#b0b3b5" stroke-width="4"/><circle cx="41" cy="41" r="5" fill="#9a9d9f"/>', 0],
  [bg('#fff') + petals.map((c, i) => `<rect x="31" y="6" width="20" height="33" rx="10" fill="${c}" opacity=".85" transform="rotate(${i * 45} 41 41)"/>`).join(''), 0],
  [bg('url(#blueS)') + '<path d="M46 18L28 50M23 59l-2 4M36 18l25 46M14 50h32M56 50h11" stroke="#fff" stroke-width="7" stroke-linecap="round"/>', 0],
  [bg('#ecebea') + '<path d="M49 0h14c11 0 19 8 19 19v45L49 30z" fill="#6fd36b"/><path d="M0 30V19C0 12 3 7 8 3l12 27z" fill="#8ade7a"/><path d="M54 0c0 16 8 26 28 29" fill="none" stroke="#cfcfd2" stroke-width="6"/><path d="M22 0h18v42H22z" fill="#3578f0"/><path d="M0 40l20 10v32h-1C8 82 0 74 0 63z" fill="#e88ac8"/><path d="M44 58l27 22c-3 1.500-5 2-8 2H44z" fill="#f5c842"/><circle cx="31" cy="51" r="20" fill="#f4f4f4"/><circle cx="31" cy="51" r="17" fill="#3578f0"/><path d="M31 38l10 23-10-5-10 5z" fill="#fff"/>', 0],
  [bg('url(#dark)') + '<svg x="12" y="25" width="25" height="29" viewBox="0 0 24 28" fill="#fff"><use href="#apple"/></svg><text x="38" y="53" font-size="32" font-weight="500" letter-spacing="-1" fill="#fff">tv</text>', 0],
  [bg('#b4b9b4') + '<rect x="24" y="6" width="34" height="71" rx="5" fill="#1a1a1a"/><rect x="26" y="8" width="30" height="67" rx="4" fill="url(#phone)"/><path d="M26 66C28 44 40 34 56 26v14C42 48 34 58 26 66z" fill="#d8e8ea" opacity=".5"/><rect x="36" y="9" width="10" height="3" rx="1.500"/>', 0],
  'sep',
  [bg('#9aa6a8') + '<rect x="2.500" y="3" width="77" height="75" rx="17" fill="#050607"/><rect x="6" y="6" width="70" height="69" rx="14" fill="#161c1f"/><text x="13" y="32" font-size="21" font-family="Liberation Mono" font-weight="700" fill="#5ad03a">$</text><path d="M32 15v21" stroke="#3f8a30" stroke-width="3"/>', 1],
  [bg('#f4f4f4') + '<circle cx="41" cy="41" r="35" fill="#f4bd3c"/><path d="M41 76a35 35 0 0 1-30.300-52.500L26 50z" fill="#48a452"/><path d="M41 41L10.700 23.500A35 35 0 0 1 71.300 23.500H41z" fill="#dc4a3a"/><path d="M26 50L10.700 23.500 41 23.500z" fill="#dc4a3a"/><path d="M56 50L41 76a35 35 0 0 0 30.300-52.500H41z" fill="#f4bd3c"/><path d="M26 50l15 26 15-26z" fill="#48a452"/><circle cx="41" cy="41" r="17.500" fill="#fff"/><circle cx="41" cy="41" r="14" fill="#3f7ee8"/>', 1],
  [bg('#fff') + '<path d="M29 5h24l6 8h7l6 9-3 6 1 10-7 24-22 17-22-17-7-24 1-10-3-6 6-9h7z" fill="url(#brave)"/><path d="M25 18l8 3 8-2 8 2 8-3 8 10-8 15 1 5-9 6-8-6-8 6-9-6 1-5-8-15z" fill="#fff"/><path d="M32 59l9-5 9 5-9 8z" fill="#fff"/><path d="M26 26l10 3 2 3-3 4 1 7 5 4 5-4 1-7-3-4 2-3 10-3-8 6 1 5-4 7h-8l-4-7 1-5z" fill="#e0552f"/><path d="M41 22l3 10-1 10h-4l-1-10z" fill="#fff"/>', 1],
  [office('W', ['#5aa3ea','#3f7fd6','#2b5cbc','#1f4390','#2457b5']), 1],
  [bg('#fbfbfa') + '<path d="M0 21h82M0 31h82M0 41h82M0 51h82M0 61h82" stroke="#c4c4c4" stroke-width="1.500"/><path d="M14 0v82" stroke="#eab0b0" stroke-width="1"/><path d="M72-8l6 2-31 70-13 21 5-26z" fill="#8fa3b4"/><path d="M74-6L44 62l-8 20" fill="none" stroke="#dfe8ee" stroke-width="2"/>', 1],
  [bg('#a32316') + '<path d="M38 17c5-2 7 4 3 16-4 12-12 25-19 30-5 3-6-2-1-6 9-7 24-11 36-11 9 0 11 5 7 7-6 3-17-5-22-14-4-8-7-20-4-22z" fill="none" stroke="#fff" stroke-width="4"/>', 1],
  [bg('#ecebe8') + '<rect x="6" y="6" width="70" height="70" rx="13" fill="url(#sky)"/><path d="M6 60c8-4 14 4 20 2l10 8v6H19C12 76 6 70 6 63z" fill="#d8dce4"/><path d="M14 76l8-9 14 4v5z" fill="#7a664c"/><path d="M42 46c0-6 36-6 36 0v12H42z" fill="#111"/><path d="M44 57h31l9 23c0 8-48 8-48 0z" fill="#a4a8ac" stroke="#55595d" stroke-width="2.500"/><path d="M51 62h18l6 15H45z" fill="#d4d7da"/><path d="M52 64l7 3-4 6zM62 68l8 2-5 6z" fill="#6a6e72"/>', 1],
  [office('X', ['#5abf86','#3fa468','#2f8a50','#265c38','#257a45']), 1],
  'sep',
  ['<g transform="translate(-7 2)"><rect width="96" height="78" fill="#0a0a0a"/><rect width="96" height="5" fill="#3a3a3a"/>' + Array.from({length: 15}, (_, i) => `<path d="M2 ${9 + i * 4.500}h${i % 3 == 0 ? 26 : 90}" stroke="${i % 3 == 2 ? '#8a8a8a' : '#4c4c4c'}" stroke-width="2" stroke-dasharray="5 1.500 8 1.500"/>`).join('') + '<rect x="64" y="52" width="29" height="30" rx="7" fill="#9aa6a8"/><rect x="66" y="54" width="25" height="26" rx="6" fill="#10161a"/><text x="69" y="65" font-size="9" font-weight="700" fill="#5ad03a">$</text></g>', 0],
  ['<g transform="translate(-7 14)"><rect width="96" height="54" fill="#e6e6e6"/><rect width="96" height="7" fill="#f2f2f2"/><rect x="33" y="7" width="31" height="36" fill="#fff"/><path d="M3 4h60M88 3h7" stroke="#b0b8c8" stroke-width="1.500" stroke-dasharray="4 3"/>' + Array.from({length: 11}, (_, i) => `<path d="M38 ${10 + i * 3}h${14 + (i * 5) % 8}" stroke="#8aa08a" stroke-width="1.200"/>`).join('') + '<rect x="33" y="45" width="31" height="9" fill="#fff"/></g><g transform="translate(56 56) scale(.37)">' + office('W', ['#5aa3ea','#3f7fd6','#2b5cbc','#1f4390','#2457b5']) + '</g>', 0],
  ['<path d="M6 6l12-10 12 4 8-6 10 4 12-4 8 8 6 2 4 8-34 8-32-6z" fill="#dcdcda"/><path d="M22-2l8 10 8-10M46-4l6 12 10-8M12 4l14 6M50 4l16 2" stroke="#5a5a5a" stroke-width="2.500" fill="none"/><path d="M28 2l8 4-4 4zM50 2l6 5h-8z" fill="#5aa8d8"/><path d="M5 6c10 8 62 8 72 0l-9 72c-2 10-52 10-54 0z" fill="url(#bin)" opacity=".93"/><path d="M5 5c0 11 72 11 72 0" fill="none" stroke="#a4a7a8" stroke-width="2"/>', 0]
];
document.getElementById('dock').innerHTML = icons.map(c => c === 'sep'
  ? '<div class="mx-[24px] mt-[16px] h-[96px] w-[2px] shrink-0 bg-[#5c5f52]"></div>'
  : `<div class="flex w-[109.7px] shrink-0 flex-col items-center pt-[18px]"><svg class="h-[82px] w-[82px] overflow-visible" viewBox="0 0 82 82">${c[0]}</svg>${c[1] ? '<i class="mt-[18px] h-[8px] w-[8px] rounded-full bg-[#b5b9a8]"></i>' : ''}</div>`).join('');
</script>
</body>
</html>
